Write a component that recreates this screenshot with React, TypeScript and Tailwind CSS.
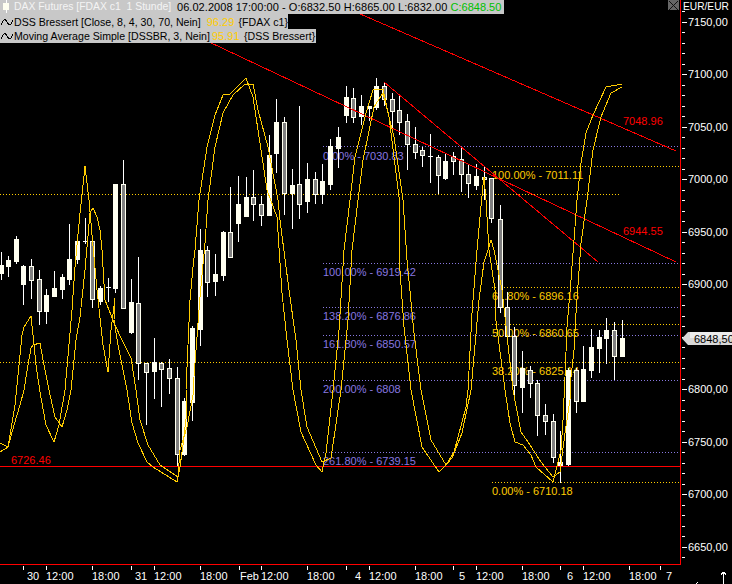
const F = '"Liberation Sans", Arial, sans-serif';
type C = [number, number, number, number, number, 'w' | 'g' | 'd'];
const candles: C[] = [
  [1,252,280,265,273,'w'],[8,256,277,260,266,'w'],[16,236,264,239,261,'w'],[23,265,305,266,284,'w'],[31,259,299,266,280,'g'],
  [39,270,325,279,311,'g'],[46,289,324,295,311,'w'],[54,271,297,288,296,'w'],[62,274,299,277,289,'w'],[69,224,285,259,279,'w'],
  [77,239,264,241,259,'w'],[85,218,244,241,241,'d'],[92,235,308,241,299,'g'],[100,286,305,288,301,'w'],[108,278,302,287,287,'d'],
  [115,184,293,184,288,'w'],[123,160,308,184,308,'g'],[131,279,334,302,332,'w'],[138,257,380,303,363,'g'],[146,363,425,363,372,'g'],
  [154,338,399,362,371,'w'],[161,362,407,363,369,'g'],[169,359,394,368,378,'g'],[177,367,467,378,454,'g'],[184,398,456,401,454,'w'],
  [192,326,421,328,402,'w'],[200,229,346,250,329,'w'],[207,246,297,250,282,'g'],[215,254,296,274,281,'w'],[223,231,281,232,275,'w'],
  [230,187,257,232,257,'g'],[238,176,242,204,223,'w'],[246,177,216,197,216,'w'],[253,170,221,197,204,'g'],[261,196,226,204,215,'g'],
  [269,135,215,155,215,'w'],[276,99,173,122,153,'w'],[284,117,215,122,193,'g'],[292,169,229,185,193,'w'],[299,106,219,184,204,'g'],
  [307,163,213,179,201,'w'],[315,172,204,179,194,'g'],[322,164,204,181,194,'w'],[330,139,190,146,184,'w'],[338,127,168,137,148,'w'],
  [346,86,123,97,115,'w'],[353,88,123,98,117,'g'],[361,95,125,106,116,'w'],[369,106,121,106,108,'w'],[376,78,110,86,107,'w'],
  [384,82,106,86,99,'g'],[392,93,133,99,111,'g'],[399,95,135,110,122,'g'],[407,114,170,121,144,'g'],[415,127,159,144,152,'g'],
  [422,147,167,150,155,'g'],[430,134,183,156,156,'d'],[438,155,194,157,175,'g'],[445,153,180,161,178,'w'],[453,152,175,156,161,'g'],
  [461,148,192,159,174,'g'],[468,164,198,174,183,'g'],[476,164,190,176,185,'w'],[484,167,200,177,179,'g'],[491,178,223,178,218,'g'],
  [500,205,313,219,307,'g'],[507,292,340,307,336,'g'],[514,327,401,336,385,'g'],[522,351,413,368,387,'w'],[530,366,398,370,383,'g'],
  [537,380,436,383,415,'g'],[545,404,435,415,421,'g'],[553,414,463,421,457,'g'],[560,431,483,462,465,'w'],[568,368,466,370,464,'w'],
  [576,368,413,370,401,'g'],[583,346,401,369,401,'w'],[591,329,378,347,370,'w'],[599,330,373,337,348,'w'],[606,318,364,330,338,'w'],
  [614,322,380,330,356,'g'],[622,320,356,338,356,'w'],
];
const fast = '0,443 8,447 15,405 18,375 22,335 24,327 31,316 33,335 36,365 40,392 46,425 54,442 59,425 65,390 70,333 72,310 75,267 80,213 82,195 85,166 89,200 92,235 97,290 103,345 108,372 111,330 115,298 114,320 118,345 122,365 127,390 132,423 138,443 147,462 153,467 177,482 180,467 183,445 187,410 186,390 190,300 193,267 195,250 199,200 207,147 215,115 223,95 230,94 246,78 253,97 258,130 267,190 277,217 282,293 287,340 293,390 301,432 316,465 322,472 326,453 333,390 339,330 344,250 350,200 355,157 366,113 373,90 383,89 389,117 399,197 399,257 404,327 411,390 422,447 439,472 446,465 454,452 466,407 468,390 472,313 477,250 483,185 484,177 486,200 489,250 495,290 495,313 505,390 510,423 515,442 523,445 531,455 536,467 553,482 556,470 561,450 563,420 565,377 567,327 571,280 577,200 581,163 586,133 593,115 606,87 622,84';
const slow = '0,452 8,447 14,425 20,405 24,390 28,365 31,348 33,345 40,343 44,365 49,390 55,417 62,427 67,410 71,390 76,340 80,317 85,270 90,213 93,208 97,217 100,230 102,250 105,300 115,325 122,340 131,358 136,390 140,420 148,445 160,465 178,477 180,450 187,427 193,395 193,390 200,297 205,243 208,200 215,147 223,113 233,95 245,84 253,84 258,110 268,147 278,200 280,220 289,290 296,340 301,390 307,427 322,462 331,458 341,390 348,320 352,250 358,200 363,160 374,107 383,93 394,137 403,200 407,260 414,333 421,390 431,440 446,465 452,458 462,433 471,390 479,300 484,262 488,250 491,240 494,250 499,275 502,290 513,390 521,432 528,442 541,462 553,477 560,472 565,433 570,400 571,377 574,350 576,313 581,243 587,200 593,150 601,117 611,93 622,87';
const purple: [number, string, number][] = [
  [146,'0.00% - 7030.83',160],[263,'100.00% - 6919.42',276],[307,'138.20% - 6876.86',320],[335,'161.80% - 6850.57',348],[380,'200.00% - 6808',393],[452,'261.80% - 6739.15',465],
];
const gold: [number, string, number][] = [
  [166,'100.00% - 7011.11',179],[287,'61.80% - 6896.16',300],[324,'50.00% - 6860.65',337],[362,'38.20% - 6825.14',375],[482,'0.00% - 6710.18',495],
];
const prices = [7150,7100,7050,7000,6950,6900,6850,6800,6750,6700,6650];
const py = (p: number) => Math.round(21.9 + (7150 - p) * 1.05);
const smallTicks: number[] = [];
for (let p = 7160; p >= 6630; p -= 10) if (p % 50 !== 0) smallTicks.push(py(p));
const times: [number, string, number][] = [
  [23,'30',27],[46,'12:00',46],[92,'18:00',92],[131,'31',135],[154,'12:00',154],[200,'18:00',200],[239,'Feb',240],[261,'12:00',261],[307,'18:00',307],[346,'4',355],[369,'12:00',369],[415,'18:00',415],[453,'5',459],[476,'12:00',476],[522,'18:00',522],[560,'6',567],[583,'12:00',583],[629,'18:00',629],[660,'7',666],
];

function Wave() {
  return (
    <svg width="12" height="10" viewBox="0 0 12 10" className="shrink-0" fill="none" stroke="#000" strokeWidth="1" shapeRendering="crispEdges">
      <polyline points="0,8 2,4 4,2 6,5 8,8 10,7 12,3" />
    </svg>
  );
}

function Legend() {
  return (
    <div className="absolute left-0 top-0 flex flex-col items-start text-[11px] leading-[14px] text-black" style={{ fontFamily: F }}>
      <div className="flex h-[14px] w-[504px] items-center bg-[#c8c8c8] whitespace-pre">
        <svg width="14" height="14" viewBox="0 0 14 14" className="shrink-0" shapeRendering="crispEdges">
          <rect x="6" y="0" width="1" height="13" fill="#fff" />
          <rect x="3" y="3" width="6" height="7" fill="#fffff0" />
        </svg>
        <span className="w-[163px] text-[10.4px] text-[#f4f4f4]">DAX Futures [FDAX c1  1 Stunde]</span>
        <span className="tracking-[0.05px]">06.02.2008 17:00:00 - O:6832.50 H:6865.00 L:6832.00 </span>
        <span className="text-[#00c000]">C:6848.50</span>
      </div>
      <div className="flex h-[15px] w-[288px] items-center bg-[#c8c8c8] whitespace-pre">
        <span className="ml-px mr-px flex"><Wave /></span>
        <span className="w-[194px] text-[10.6px]">DSS Bressert [Close, 8, 4, 30, 70, Nein]</span>
        <span className="w-[32px] text-[#ffcc00]">96.29</span>
        <span className="text-[10.6px]">{'{FDAX c1}'}</span>
      </div>
      <div className="flex h-[14px] w-[316px] items-center bg-[#c8c8c8] whitespace-pre">
        <span className="ml-px mr-px flex"><Wave /></span>
        <span className="w-[198px] text-[10.6px]">Moving Average Simple [DSSBR, 3, Nein]</span>
        <span className="w-[32px] text-[#ffcc00]">95.91</span>
        <span className="text-[10.6px]">{'{DSS Bressert}'}</span>
      </div>
    </div>
  );
}

function Plot() {
  return (
    <svg width="680" height="564" viewBox="0 0 680 564" className="block" style={{ fontFamily: F, fontSize: 11 }}>
      <g shapeRendering="crispEdges" strokeWidth="1" strokeDasharray="1 2">
        <line x1="0" x2="621" y1="194.5" y2="194.5" stroke="#ffcc00" />
        {gold.map(([y]) => <line key={y} x1="492" x2="680" y1={y + 0.5} y2={y + 0.5} stroke="#ffcc00" />)}
        <line x1="0" x2="492" y1="362.5" y2="362.5" stroke="#ffcc00" />
        {purple.map(([y]) => <line key={y} x1="323" x2="680" y1={y + 0.5} y2={y + 0.5} stroke="#8878e0" />)}
      </g>
      {purple.map(([y, t, b]) => <text key={t} x="323" y={b} fill="#8878e0">{t}</text>)}
      {gold.map(([y, t, b]) => <text key={t} x="492" y={b} fill="#ffcc00">{t}</text>)}
      <text x="11" y="464" fill="#ff0000">6726.46</text>
      <text x="623" y="125" fill="#ff0000">7048.96</text>
      <text x="623" y="235" fill="#ff0000">6944.55</text>
      <g shapeRendering="crispEdges">
        {candles.map(([x, wt, wb, bt, bb, k]) => (
          <g key={x}>
            <line x1={x + 0.5} x2={x + 0.5} y1={wt} y2={wb} stroke="#ffffff" />
            {k === 'd' ? (
              <line x1={x - 2} x2={x + 3} y1={bt + 0.5} y2={bt + 0.5} stroke="#ffffff" />
            ) : k === 'w' ? (
              <rect x={x - 2} y={bt} width="5" height={bb - bt + 1} fill="#fffff0" />
            ) : (
              <rect x={x - 1.5} y={bt + 0.5} width="4" height={bb - bt} fill="#808080" stroke="#fffff0" />
            )}
          </g>
        ))}
      </g>
      <g fill="none" stroke="#ff0000" strokeWidth="1" shapeRendering="crispEdges">
        <line x1="328" y1="0" x2="676" y2="151" />
        <line x1="120" y1="0" x2="676" y2="262" />
        <line x1="384" y1="82" x2="598" y2="262" />
        <line x1="0" y1="466.5" x2="680" y2="466.5" />
      </g>
      <g fill="none" stroke="#ffcc00" strokeWidth="1" shapeRendering="crispEdges">
        <polyline points={fast} />
        <polyline points={slow} />
      </g>
    </svg>
  );
}

function PriceAxis() {
  return (
    <svg width="51" height="564" viewBox="681 0 51 564" className="block" style={{ fontFamily: F, fontSize: 11 }}>
      <text x="683" y="10" fill="#fff" fontSize="10.2">EUR/EUR</text>
      <g stroke="#fff" shapeRendering="crispEdges">
        {smallTicks.map((y) => <line key={y} x1="682" x2="685" y1={y + 0.5} y2={y + 0.5} />)}
        {prices.map((p) => <line key={p} x1="682" x2="687" y1={py(p) + 0.5} y2={py(p) + 0.5} />)}
      </g>
      {prices.map((p) => p !== 6850 && (
        <text key={p} x="688" y={py(p) + 4} fill="#fff">{`${p},00`}</text>
      ))}
      <polygon points="682,338.5 688,332 732,332 732,345 688,345" fill="#d8d8d8" />
      <rect x="690" y="332" width="42" height="6" fill="#ececec" />
      <text x="694" y="343" fill="#000">6848,50</text>
    </svg>
  );
}

function TimeAxis() {
  return (
    <svg width="732" height="19" viewBox="0 565 732 19" className="block" style={{ fontFamily: F, fontSize: 11 }}>
      <g stroke="#fff" shapeRendering="crispEdges">
        {times.map(([x]) => <line key={x} x1={x + 0.5} x2={x + 0.5} y1="566" y2="570" />)}
        <line x1="723.5" x2="723.5" y1="572" y2="584" />
        <line x1="721" x2="723" y1="575" y2="572" />
        <line x1="724" x2="726" y1="572" y2="575" />
        <line x1="696" x2="698" y1="584" y2="582" />
      </g>
      {times.map(([x, t, tx]) => <text key={x} x={tx} y="580" fill="#fff">{t}</text>)}
    </svg>
  );
}

export default function App() {
  return (
    <div className="flex h-[584px] w-[732px] flex-col overflow-hidden bg-black">
      <div className="flex h-[565px] shrink-0">
        <div className="relative h-[565px] w-[681px] shrink-0 border-r border-b border-[#ff0000]">
          <Plot />
          <Legend />
          <div className="absolute right-px top-0 flex h-[10px] w-[11px] items-center justify-center bg-[#666666]">
            <svg width="9" height="9" viewBox="0 0 9 9" stroke="#111" shapeRendering="crispEdges"><path d="M0 0L9 9M9 0L0 9" /></svg>
          </div>
        </div>
        <PriceAxis />
      </div>
      <TimeAxis />
    </div>
  );
}
